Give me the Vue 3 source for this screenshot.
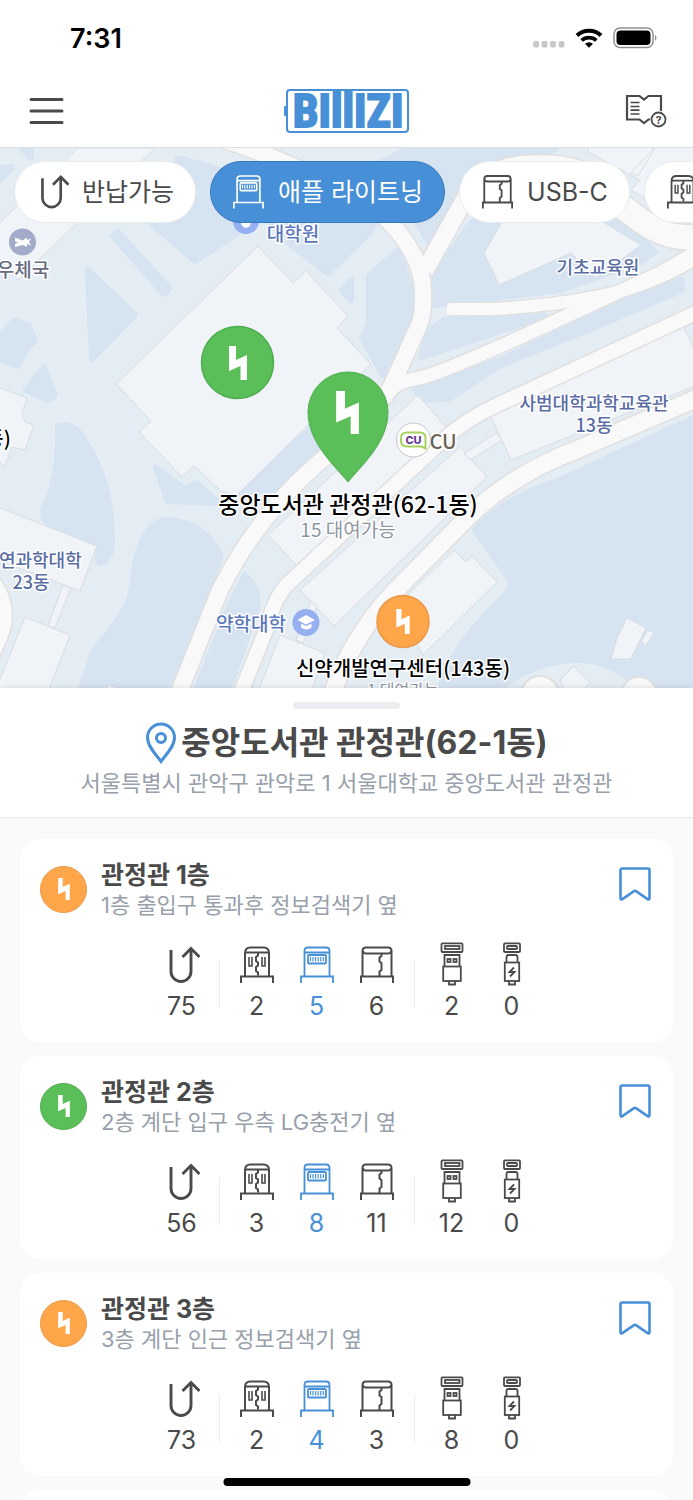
<template>
  <div class="app">
    <svg class="sprite" aria-hidden="true">
      <symbol id="icon-return" viewBox="0 0 36 46">
        <path d="M7 8v21.500a10 10 0 0 0 20 0V6.500M18.500 15l8.500-8.500 8.500 8.500" stroke-width="2.900" />
      </symbol>
      <symbol id="icon-multi" viewBox="0 0 36 46">
        <path d="M6 34V11q0-5.500 5.500-5.500h13q5.500 0 5.500 5.500v23M7 10.500h22M2 41v-6.500h32V41" stroke-width="2" />
        <path d="M10 15v9h3v-9M23 15v9h3v-9" stroke-width="1.600" />
        <path d="M19 10.500v3l-2 1.500v4l2 1.500v3l-2 1.500v4l2 1.500v3" stroke-width="2" />
      </symbol>
      <symbol id="icon-lightning" viewBox="0 0 36 46">
        <path d="M5.500 34V9q0-3.500 3.500-3.500h18q3.500 0 3.500 3.500v25M6 10.500h24M2 41v-6.500h32V41" stroke-width="1.800" />
        <rect x="9" y="13" width="18" height="8.500" rx="1" stroke-width="1.800" />
        <path d="M11.500 15v4M14 15v4.500M16.600 15v4.500M19.200 15v4.500M21.800 15v4.500M24.400 15v4" stroke-width="1.200" />
      </symbol>
      <symbol id="icon-usbc" viewBox="0 0 36 46">
        <path d="M3.500 34V9q0-3.500 3.500-3.500h22q3.500 0 3.500 3.500v25M4 9q0 2.500 3 2.500h22q3 0 3-2.500M2 41v-6.500h32V41" stroke-width="2" />
        <path d="M22.500 11.500v2.500l-2 1.500v4l2 1.500v7l-2 1.500v5" stroke-width="2" />
      </symbol>
      <symbol id="icon-cable-a" viewBox="0 0 36 46">
        <g stroke-width="1.800">
          <rect x="7.500" y="1.300" width="21" height="8.700" rx="1" />
          <rect x="11" y="4" width="14.500" height="3" />
          <path d="M10.500 24V13h15v11" />
          <rect x="13.500" y="17" width="3" height="3" />
          <rect x="19.500" y="17" width="3" height="3" />
          <rect x="9.200" y="24.500" width="17.600" height="14.500" />
          <path d="M15 39v3.500h6V39" />
        </g>
      </symbol>
      <symbol id="icon-cable-c" viewBox="0 0 36 46">
        <g stroke-width="1.800">
          <rect x="10" y="1.300" width="16" height="8.700" rx="1" />
          <rect x="13" y="4" width="10" height="3" rx="1" />
          <path d="M12.500 20v-5q0-2 2-2h7q2 0 2 2v5" />
          <rect x="10.800" y="20.500" width="14.400" height="18.500" />
          <path d="M15 39v3.500h6V39" />
          <path d="M20 25.500l-4.500 4.500h5l-4.500 4.500" />
        </g>
      </symbol>
      <symbol id="icon-bolt" viewBox="0 0 18 34">
        <path d="M0 0h7v14l11-5v25h-6.500V20L0 25z" />
      </symbol>
    </svg>

    <div class="status-bar">
      <span class="clock">7:31</span>
      <div class="status-icons">
        <svg class="signal" width="32" height="22" viewBox="0 0 32 22">
          <rect v-for="i in 4" :key="i" :x="(i - 1) * 8.5" y="14" width="6" height="6.500" rx="2" />
        </svg>
        <svg width="28" height="22" viewBox="0 0 28 22">
          <path d="M2 8.500a17.500 17.500 0 0 1 24 0" fill="none" stroke="#000" stroke-width="4" />
          <path d="M6.700 13.500a10.800 10.800 0 0 1 14.600 0" fill="none" stroke="#000" stroke-width="3.600" />
          <path d="M14 20.800l-4-4q4-3 8 0z" />
        </svg>
        <svg width="46" height="22" viewBox="0 0 46 22">
          <rect x="1" y="1" width="39" height="19.500" rx="6" fill="none" stroke="#909090" stroke-width="1.500" />
          <rect x="3.500" y="3.500" width="34" height="14.500" rx="4" />
          <path d="M42 7.500q3 3.300 0 6.600z" fill="#909090" />
        </svg>
      </div>
    </div>

    <header class="header">
      <button class="icon-button" type="button">
        <svg width="40" height="26" viewBox="0 0 40 26">
          <path d="M2 1.500h31M2 13h31M2 24.500h31" stroke="#4a4a4a" stroke-width="3" stroke-linecap="round" />
        </svg>
      </button>
      <svg class="logo" width="126" height="44" viewBox="0 0 126 44">
        <rect x="3" y="1" width="121" height="42" rx="3" fill="none" stroke="#4790d7" stroke-width="2" />
        <rect x="0" y="17" width="3" height="10" rx="1" fill="#4790d7" />
        <text x="64" y="38" text-anchor="middle">BIllIZI</text>
      </svg>
      <button class="icon-button" type="button">
        <svg width="42" height="34" viewBox="0 0 42 34">
          <path d="M25 25.500h-1.500l-4.500 3.500-4.500-3.500H2V2h12.500L19 5.500 23.500 2H36v15" fill="none" stroke="#4a4a4a" stroke-width="2.200" />
          <path d="M5.500 8.500h9M5.500 12.500h9M5.500 16.200h9M5.500 20h9" stroke="#4a4a4a" stroke-width="1.700" />
          <circle cx="33.500" cy="25.500" r="7" fill="#fff" stroke="#4a4a4a" stroke-width="1.800" />
          <text class="guide-mark" x="33.500" y="29.500" text-anchor="middle">?</text>
        </svg>
      </button>
    </header>

    <section class="map">
      <svg class="map-canvas" viewBox="0 148 693 540" preserveAspectRatio="xMidYMid slice">
        <rect x="-400" y="100" width="1500" height="640" fill="#e4ecf4" />

        <!-- 녹지 -->
        <g class="park">
          <path v-for="(d, i) in parks" :key="i" :d="d" />
        </g>
        <path class="ground" d="M500 694Q518 675 545 668Q580 658 605 668Q630 678 640 694Z" />

        <!-- 건물 -->
        <g class="building">
          <path v-for="(d, i) in buildings" :key="i" :d="d" />
        </g>

        <!-- 도로 -->
        <g class="road-edge">
          <path v-for="(road, i) in roads" :key="i" :d="road.d" :stroke-width="road.width + 3" />
        </g>
        <g class="road">
          <path v-for="(road, i) in roads" :key="i" :d="road.d" :stroke-width="road.width" />
        </g>
        <g class="roundabout">
          <circle cx="540" cy="695" r="19" />
          <circle cx="639" cy="695" r="18" />
        </g>

        <!-- 장소 이름 -->
        <g text-anchor="middle">
          <text
            v-for="place in places"
            :key="place.text"
            :class="['place', place.type]"
            :x="place.x"
            :y="place.y"
            :font-size="place.size"
          >{{ place.text }}</text>
        </g>

        <circle cx="22.500" cy="242" r="13.500" fill="#a3abcb" />
        <path d="M15 237.500l7.500 3 4.500-3v2.500l4-1.500-2 3.500 2 3.500-4-1.500v3l-4.500-2-7.500 2v-3l3-1.500-3-1.500z" fill="#fff" />
        <circle cx="246" cy="221" r="13" fill="#95aff0" />
        <path d="M241 222h10q0 5-5 6q-5-1-5-6z" fill="#fff" />
        <circle cx="306" cy="622.500" r="13.500" fill="#95aff0" />
        <path d="M297.500 620l8.500-5 9 5-9 4.500zM301 623.500l5 2.500 5.500-2.500v4q-5 4-10.500 0z" fill="#fff" />

        <circle cx="413.500" cy="440" r="17" fill="#fff" stroke="#c5c8cd" />
        <path d="M407 432.500h13q5.500 0 5.500 5.500v10.500l-4-2h-14.500q-6 0-6-5.500v-3q0-5.500 6-5.500z" fill="none" stroke="#a5d15a" stroke-width="2" />
        <text class="cu-logo" x="413.500" y="443.500" text-anchor="middle">CU</text>

        <!-- 대여소 마커 -->
        <circle cx="237.500" cy="362.500" r="36" fill="#5bbf59" stroke="#4fae4e" stroke-width="1.500" />
        <use class="bolt" href="#icon-bolt" x="229" y="346" width="18" height="34" />
        <path d="M348 482C336 467 308 443 308 412a40 40 0 0 1 80 0C388 443 360 467 348 482Z" fill="#5bbf59" stroke="#4fae4e" />
        <use class="bolt" href="#icon-bolt" x="336" y="391" width="23" height="43" />
        <circle cx="403" cy="621.500" r="26" fill="#ffa64a" stroke="#ea9946" stroke-width="1.500" />
        <use class="bolt" href="#icon-bolt" x="396" y="609" width="14" height="25" />
      </svg>

      <div class="filters">
        <button
          v-for="filter in filters"
          :key="filter.icon"
          type="button"
          :class="['chip', { active: filter.icon === selected }]"
          @click="selected = filter.icon"
        >
          <svg class="chip-icon"><use :href="`#icon-${filter.icon}`" /></svg>
          <span v-if="filter.label">{{ filter.label }}</span>
        </button>
      </div>
    </section>

    <main class="sheet">
      <div class="sheet-head">
        <div class="handle"></div>
        <h1 class="sheet-title">
          <svg width="32" height="42" viewBox="0 0 32 42">
            <path d="M16 39.500C12 33.500 2.500 25 2.500 15.500a13.500 13.500 0 0 1 27 0C29.500 25 20 33.500 16 39.500Z" />
            <circle cx="16" cy="16" r="4.500" />
          </svg>
          중앙도서관 관정관(62-1동)
        </h1>
        <p class="address">서울특별시 관악구 관악로 1 서울대학교 중앙도서관 관정관</p>
      </div>

      <div class="list">
        <article v-for="station in stations" :key="station.name" class="card">
          <div class="card-head">
            <span :class="['badge', station.color]">
              <svg class="bolt" width="12" height="22"><use href="#icon-bolt" /></svg>
            </span>
            <div class="card-text">
              <h2>{{ station.name }}</h2>
              <p>{{ station.detail }}</p>
            </div>
            <button class="icon-button bookmark" type="button">
              <svg width="32" height="34" viewBox="0 0 32 34">
                <path d="M3 1.500h26a1.500 1.500 0 0 1 1.500 1.500v28.500a1 1 0 0 1-1.500 0.800L17 24.200a2 2 0 0 0-2 0L3 32.300a1 1 0 0 1-1.500-0.800V3a1.500 1.500 0 0 1 1.500-1.500z" />
              </svg>
            </button>
          </div>
          <ul class="counts">
            <li
              v-for="(count, i) in station.counts"
              :key="icons[i]"
              :class="{ active: icons[i] === selected, split: i === 1 || i === 4 }"
            >
              <svg class="count-icon"><use :href="`#icon-${icons[i]}`" /></svg>
              <span>{{ count }}</span>
            </li>
          </ul>
        </article>
        <div class="card placeholder"></div>
      </div>
    </main>

    <div class="home-indicator"></div>
  </div>
</template>

<script setup>
import { ref } from 'vue';

const selected = ref('lightning');

const filters = [
  { icon: 'return', label: '반납가능' },
  { icon: 'lightning', label: '애플 라이트닝' },
  { icon: 'usbc', label: 'USB-C' },
  { icon: 'multi', label: '' }
];

const icons = ['return', 'multi', 'lightning', 'usbc', 'cable-a', 'cable-c'];

const stations = [
  { name: '관정관 1층', detail: '1층 출입구 통과후 정보검색기 옆', color: 'orange', counts: [75, 2, 5, 6, 2, 0] },
  { name: '관정관 2층', detail: '2층 계단 입구 우측 LG충전기 옆', color: 'green', counts: [56, 3, 8, 11, 12, 0] },
  { name: '관정관 3층', detail: '3층 계단 인근 정보검색기 옆', color: 'orange', counts: [73, 2, 4, 3, 8, 0] }
];

// 지도 데이터
const places = [
  { text: '대학원', x: 293, y: 241, size: 19, type: 'school' },
  { text: '우체국', x: 23, y: 277, size: 19, type: 'post' },
  { text: '기초교육원', x: 598, y: 274, size: 18, type: 'hall' },
  { text: '사범대학과학교육관', x: 594, y: 410, size: 18, type: 'hall' },
  { text: '13동', x: 594, y: 432, size: 18, type: 'hall' },
  { text: '자연과학대학', x: 32, y: 567, size: 18, type: 'hall' },
  { text: '23동', x: 31, y: 589, size: 18, type: 'hall' },
  { text: '약학대학', x: 251, y: 631, size: 19, type: 'school' },
  { text: 'CU', x: 443, y: 449, size: 20, type: 'store' },
  { text: '동)', x: -2, y: 446, size: 20, type: 'station' },
  { text: '중앙도서관 관정관(62-1동)', x: 348, y: 513, size: 23, type: 'station' },
  { text: '15 대여가능', x: 348, y: 537, size: 19, type: 'rental' },
  { text: '신약개발연구센터(143동)', x: 403, y: 676, size: 20, type: 'station' },
  { text: '1 대여가능', x: 403, y: 696, size: 16, type: 'rental' }
];

const parks = [
  'M0 168L12 167L0 180Z',
  'M22 148L31 158L31 148Z',
  'M88 270L135 315L92 359Z',
  'M113 236L118 232L169 288L164 294Z',
  'M14 321L28 325L35 340L26 349L18 366L2 360L-5 340Z',
  'M44 367L55 395L48 400L26 390Z',
  'M178 158L240 176L260 215L235 235L195 261L152 224L174 190Z',
  'M250 200L385 200L370 232L328 273L285 240Z',
  'M342 290L351 280L351 300Z',
  'M369 276L398 250L412 290L411 315L383 375L362 337L369 325Z',
  'M343 182Q375 165 410 148H556L540 158Q500 155 470 180L430 245L400 190Z',
  'M435 275L470 224L500 200H600L655 252L640 262L560 290L435 305Z',
  'M445 320L545 316L420 358L430 330Z',
  'M415 390L500 360L660 284L682 280L682 290L600 325L500 365L450 398L425 400Z',
  'M58 426Q75 422 84 440Q112 480 112 543Q110 562 100 563Q96 560 100 546L60 530Q40 522 44 508Q60 475 58 426Z',
  'M167 520Q205 522 221 556L167 692H80L94 650Q130 610 132 587Q138 522 167 520Z',
  'M156 468L185 489L197 483L218 503L168 501Z',
  'M245 575Q262 592 256 612L228 692H195L228 610Z',
  'M238 493L312 428L335 440L280 490Z',
  'M700 415L560 480Q500 500 475 530L510 580Q512 590 500 600Q445 655 440 692H700Z'
];

const buildings = [
  'M258 246L293 283L306 271L348 316L337 328L371 364L308 425L237 495L222 492L194 466L182 477L139 432L151 421L116 384Z',
  'M78 148H155L18 280L-5 255V227Z',
  'M503 220L484 253L499 285L571 253L596 278L641 245L603 222Z',
  'M588 145V152L640 180L631 190L700 230V145Z',
  'M654 148L631 173L638 176L655 148Z',
  'M418 395L446 427L298 567L268 535Z',
  'M460 447L487 477L334 626L300 590Z',
  'M464 454L496 433L502 440L470 460Z',
  'M490 415L683 326L710 380L511 460Z',
  'M454 550L466 562L472 556L497 582L423 655L397 605Z',
  'M-2 507L97 546L80 591L-2 560Z',
  'M63 585L71 588L55 628L48 626Z',
  'M25 617L70 635L48 692H-5Z',
  'M-2 387L27 398L22 413L25 422L34 425L25 450L12 447L5 466L-2 462Z',
  'M310 602L317 606L303 643L296 640Z',
  'M280 635L325 653L311 692H258Z',
  'M108 685L130 692H105Z',
  'M627 618L646 628L631 659H611L617 638Z',
  'M648 630L654 633L646 645L641 642Z',
  'M574 666L590 683L580 692H565L560 680Z'
];

const roads = [
  { d: 'M225 140Q300 165 370 205C410 235 423 270 423 290C424 325 418 325 410 345L392 385Q385 400 330 453Q260 510 220 590L178 695', width: 16 },
  { d: 'M425 270L470 190Q495 163 535 164Q575 162 600 180', width: 17 },
  { d: 'M600 190L640 220Q670 242 700 236', width: 24 },
  { d: 'M447 309H495Q590 303 640 285Q680 270 700 255', width: 12 },
  { d: 'M385 400Q390 382 420 378Q450 370 560 319L660 273L700 250', width: 13 },
  { d: 'M700 311L495 406Q465 420 443 440L290 582Q275 595 268 625L240 695', width: 14 },
  { d: 'M700 397L576 450Q510 475 465 520L393 593Q350 640 332 695', width: 17 },
  { d: 'M-8 580Q8 600 4 625Q2 635 -8 655', width: 14 }
];
</script>

<style>
body {
  margin: 0;
}
</style>

<style scoped>
.app {
  display: flex;
  flex-direction: column;
  height: 100vh;
  overflow: hidden;
  background: #fff;
  color: #4a4a4a;
  font-family: Inter, "Noto Sans CJK KR", sans-serif;
}

h1,
h2,
p,
ul {
  margin: 0;
  padding: 0;
}

button {
  border: none;
  background: none;
  font-family: inherit;
  cursor: pointer;
}

.sprite {
  position: absolute;
  width: 0;
  height: 0;
}

.status-bar {
  flex: none;
  display: flex;
  align-items: center;
  justify-content: space-between;
  height: 76px;
  padding: 0 34px 0 70px;
  box-sizing: border-box;
}

.clock {
  color: #000;
  font-size: 27px;
  font-weight: 600;
}

.status-icons {
  display: flex;
  gap: 10px;
}

.signal {
  fill: #c8c8c8;
}

.header {
  flex: none;
  display: flex;
  align-items: center;
  justify-content: space-between;
  height: 72px;
  padding: 0 26px 2px 29px;
  border-bottom: 1px solid #dcdfe2;
  box-sizing: border-box;
}

.icon-button {
  display: flex;
  padding: 0;
}

.logo text {
  fill: #4790d7;
  stroke: #4790d7;
  stroke-width: 2px;
  font-family: "Liberation Sans Narrow", "Roboto Condensed", Roboto, sans-serif;
  font-size: 46px;
  font-weight: 700;
}

.guide-mark {
  fill: #4a4a4a;
  font-size: 11px;
  font-weight: 700;
}

.map {
  position: relative;
  flex: none;
  height: 540px;
  overflow: hidden;
}

.map-canvas {
  display: block;
  width: 100%;
  height: 100%;
}

.park {
  fill: #d6e3f0;
  stroke: #d6e3f0;
  stroke-width: 6;
  stroke-linejoin: round;
}

.ground {
  fill: #e4ecf4;
}

.building {
  fill: #f0f3f8;
  stroke: #d8dde2;
}

.road,
.road-edge {
  fill: none;
  stroke: #f9f9f9;
}

.road-edge {
  stroke: #e0e0e0;
}

.roundabout {
  fill: #f7f8f9;
  stroke: #e0e0e0;
  stroke-width: 2;
}

.place {
  font-family: "Noto Sans CJK KR", sans-serif;
  font-weight: 500;
  stroke: #fff;
  stroke-width: 3px;
  stroke-linejoin: round;
  paint-order: stroke;
}

.place.school {
  fill: #5b77bd;
}

.place.hall {
  fill: #596ca3;
}

.place.post {
  fill: #666b80;
}

.place.store {
  fill: #6b6256;
}

.place.station {
  fill: #000;
}

.place.rental {
  fill: #8d959f;
  font-weight: 400;
}

.cu-logo {
  fill: #6a3d98;
  font-size: 11px;
  font-weight: 800;
}

.bolt {
  fill: #fff;
}

.filters {
  position: absolute;
  top: 13px;
  left: 0;
  right: 0;
  display: flex;
  gap: 14px;
  padding-left: 14px;
  overflow: hidden;
}

.chip {
  flex: none;
  display: flex;
  align-items: center;
  gap: 13px;
  height: 62px;
  padding: 0 21px;
  border: 1px solid #e9ebee;
  border-radius: 31px;
  background: #fff;
  color: #4a4a4a;
  font-size: 25px;
  line-height: 30px;
}

.chip.active {
  border-color: #3579bf;
  background: #4790d7;
  color: #fff;
}

.chip-icon,
.count-icon {
  fill: none;
  stroke: currentColor;
}

.chip-icon {
  width: 33px;
  height: 42px;
}

.sheet {
  flex: 1;
  min-height: 0;
  display: flex;
  flex-direction: column;
  position: relative;
  background: #fafafa;
  box-shadow: 0 0 6px rgba(0, 0, 0, 0.12);
}

.sheet-head {
  flex: none;
  display: flex;
  flex-direction: column;
  align-items: center;
  padding: 14px 20px 19px;
  border-bottom: 1px solid #e8e8ea;
  background: #fff;
}

.handle {
  width: 107px;
  height: 7px;
  border-radius: 4px;
  background: #ebebf0;
}

.sheet-title {
  display: flex;
  align-items: center;
  gap: 4px;
  margin-top: 13px;
  font-size: 32px;
  font-weight: 700;
  line-height: 42px;
}

.sheet-title svg {
  fill: none;
  stroke: #4790d7;
  stroke-width: 3;
}

.address {
  margin-top: 4px;
  color: #97a0ab;
  font-size: 22px;
  line-height: 30px;
  text-align: center;
}

.list {
  flex: 1;
  min-height: 0;
  display: flex;
  flex-direction: column;
  gap: 14px;
  padding: 21px 20px 0;
  overflow: hidden;
}

.card {
  flex: none;
  padding: 20px 20px 22px;
  border-radius: 20px;
  background: #fff;
}

.placeholder {
  min-height: 160px;
}

.card-head {
  display: flex;
  align-items: center;
  gap: 14px;
}

.badge {
  display: flex;
  align-items: center;
  justify-content: center;
  width: 47px;
  height: 47px;
  border: 1px solid #ea9946;
  border-radius: 50%;
  box-sizing: border-box;
  background: #ffa64a;
}

.badge.green {
  border-color: #4fae4e;
  background: #5bbf59;
}

.card-text {
  flex: 1;
}

.card-text h2 {
  font-size: 25px;
  font-weight: 700;
  line-height: 32px;
}

.card-text p {
  color: #97a0ab;
  font-size: 22px;
  line-height: 28px;
}

.bookmark {
  align-self: flex-start;
  padding-top: 8px;
  padding-right: 2px;
}

.bookmark svg {
  fill: none;
  stroke: #4790d7;
  stroke-width: 2.6;
}

.counts {
  display: flex;
  justify-content: center;
  margin-top: 23px;
  list-style: none;
}

.counts li {
  display: flex;
  flex-direction: column;
  align-items: center;
  gap: 4px;
  width: 60px;
  font-size: 25px;
  line-height: 28px;
}

.counts li.active {
  color: #4790d7;
}

.counts li.split::before {
  content: "";
  align-self: flex-start;
  width: 1px;
  height: 48px;
  margin: 18px 0 -70px -8px;
  background: #ededf0;
}

.counts li.split {
  margin-left: 15px;
}

.count-icon {
  width: 36px;
  height: 46px;
}

.home-indicator {
  position: fixed;
  bottom: 14px;
  left: 50%;
  width: 247px;
  height: 8px;
  border-radius: 4px;
  background: #000;
  transform: translateX(-50%);
}
</style>
